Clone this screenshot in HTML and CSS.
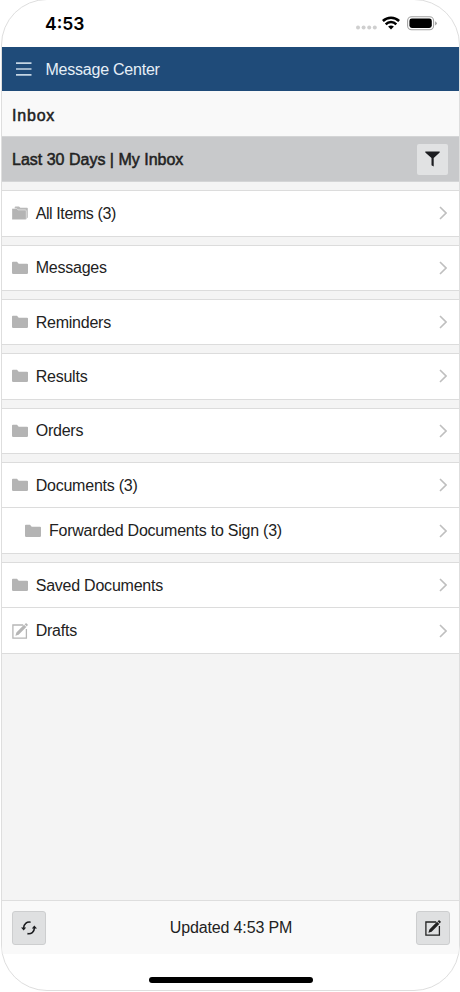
FILE: index.html
```
<!DOCTYPE html>
<html lang="en">
<head>
<meta charset="utf-8">
<title>Message Center</title>
<link rel="stylesheet" href="styles.css">
</head>
<body>
<svg class="defs" width="0" height="0" aria-hidden="true">
  <symbol id="folder" viewBox="0 0 16 13"><path d="M0 1.2Q0 .3 .9 .3H5L6.7 2.2H15Q16 2.2 16 3.1V11.6Q16 12.4 15.1 12.4H.9Q0 12.4 0 11.6Z" fill="#b4b4b4"/></symbol>
  <symbol id="folders" viewBox="0 0 16 14"><path d="M2.7 2.8V1.3Q2.7.4 3.6.4H7L8.4 1.7H15Q15.8 1.7 15.8 2.5V11.5L14.3 13" fill="#b9b9b9"/><path d="M-.2 3.3Q-.2 2.4.8 2.4H4.6L6 3.9H13.2Q14.3 3.9 14.3 4.9V12.8Q14.3 13.7 13.3 13.7H.8Q-.2 13.7-.2 12.8Z" fill="#b4b4b4" stroke="#f4f4f4" stroke-width=".6"/></symbol>
  <symbol id="chevron" viewBox="0 0 8 14"><path d="M1 1l6 6-6 6" fill="none" stroke="#bfbfbf" stroke-width="1.6"/></symbol>
  <symbol id="compose" viewBox="0 0 16 16"><path d="M11.2 2H.9V15.2H14.4V6" fill="none" stroke="currentColor" stroke-width="1.3"/><path d="M3.4 12.7L4.4 9.5 12 1.8 14.3 4.1 6.6 11.7ZM12.6 1.2L13.5.4Q14.1-.1 14.7.5L15.5 1.3Q16 1.9 15.5 2.5L14.8 3.4Z" fill="currentColor"/></symbol>
</svg>
<div class="phone">
  <div class="status">
    <span class="time">4:53</span>
    <div class="signals">
      <svg width="21" height="5" viewBox="0 0 21 5" class="dots"><g fill="#cfcfcf"><circle cx="2" cy="2.5" r="2"/><circle cx="7.6" cy="2.5" r="2"/><circle cx="13.2" cy="2.5" r="2"/><circle cx="18.8" cy="2.5" r="2"/></g></svg>
      <svg width="18" height="14" viewBox="0 0 18 14" class="wifi"><g fill="none" stroke="#000" stroke-width="2.5"><path d="M.9 5A11.6 11.6 0 0 1 17.1 5"/><path d="M3.7 8.3A7.5 7.5 0 0 1 14.3 8.3"/></g><path d="M9 13.4L6.1 10.6Q9 8.4 11.9 10.6Z"/></svg>
      <svg width="30" height="15" viewBox="0 0 30 15" class="battery"><rect x=".6" y=".8" width="26" height="13" rx="4" fill="none" stroke="#a3a3a3" stroke-width="1.1"/><rect x="2.4" y="2.6" width="22.4" height="9.4" rx="2.4"/><path d="M28.2 5.2Q29.7 6 29.7 7.3T28.2 9.4Z" fill="#999"/></svg>
    </div>
  </div>
  <header class="bar">
    <svg width="16" height="14" viewBox="0 0 16 14"><path d="M0 1.2H15.5M0 7H15.5M0 12.8H15.5" stroke="#c4d5e3" stroke-width="1.7"/></svg>
    <span>Message Center</span>
  </header>
  <h1 class="title">Inbox</h1>
  <div class="filter">
    <span class="range">Last 30 Days | My Inbox</span>
    <span class="filter-btn"><svg width="15" height="16" viewBox="0 0 15 16"><path d="M.3.4H14.7V1.6L8.7 6.9V15.5L6.5 14.3V6.9L.3 1.6Z" fill="#1c1d20"/></svg></span>
  </div>
  <main class="list">
    <section class="group"><div class="row"><svg class="ico"><use href="#folders"/></svg><span class="all">All Items (3)</span><svg class="chev"><use href="#chevron"/></svg></div></section>
    <section class="group"><div class="row"><svg class="ico"><use href="#folder"/></svg><span>Messages</span><svg class="chev"><use href="#chevron"/></svg></div></section>
    <section class="group"><div class="row"><svg class="ico"><use href="#folder"/></svg><span>Reminders</span><svg class="chev"><use href="#chevron"/></svg></div></section>
    <section class="group"><div class="row"><svg class="ico"><use href="#folder"/></svg><span>Results</span><svg class="chev"><use href="#chevron"/></svg></div></section>
    <section class="group"><div class="row"><svg class="ico"><use href="#folder"/></svg><span>Orders</span><svg class="chev"><use href="#chevron"/></svg></div></section>
    <section class="group">
      <div class="row"><svg class="ico"><use href="#folder"/></svg><span>Documents (3)</span><svg class="chev"><use href="#chevron"/></svg></div>
      <div class="row sub"><svg class="ico"><use href="#folder"/></svg><span>Forwarded Documents to Sign (3)</span><svg class="chev"><use href="#chevron"/></svg></div>
    </section>
    <section class="group">
      <div class="row"><svg class="ico"><use href="#folder"/></svg><span>Saved Documents</span><svg class="chev"><use href="#chevron"/></svg></div>
      <div class="row"><svg class="ico draft"><use href="#compose"/></svg><span>Drafts</span><svg class="chev"><use href="#chevron"/></svg></div>
    </section>
  </main>
  <footer class="footer">
    <span class="btn"><svg width="16" height="14" viewBox="0 0 16 14"><g fill="none" stroke="#1c1d20" stroke-width="1.6"><path d="M9.6 1.2C5.8.5 2.7 3 2.6 7"/><path d="M6.4 12.6C10.2 13.4 13.3 10.9 13.4 7"/></g><path d="M0 6.5H5.2L2.7 9.4ZM16 7.4H10.8L13.3 4.5Z" fill="#1c1d20"/></svg></span>
    <span class="updated">Updated 4:53 PM</span>
    <span class="btn"><svg width="16" height="16"><use href="#compose"/></svg></span>
  </footer>
  <div class="home"><span></span></div>
</div>
</body>
</html>
```
FILE: styles.css
```
* { box-sizing: border-box; }
body { margin: 0; background: #fff; color: #222; font: 16px/20px "Liberation Sans", Arial, sans-serif; letter-spacing: -.23px; overflow: hidden; }
svg { display: block; flex: none; }
.defs { position: absolute; }
.phone { width: 459px; height: 992px; margin-left: 1px; border: 1px solid #dedede; border-radius: 46px; overflow: hidden; display: flex; flex-direction: column; margin-top: -1px; }
.status { height: 47px; flex: none; display: flex; justify-content: space-between; padding: 0 22px 0 43px; }
.time { font: 600 17.5px/22px Inter, sans-serif; letter-spacing: 0; color: #000; padding-top: 13px; }
.signals { display: flex; padding-top: 16px; }
.dots { margin: 9px 5px 0 0; }
.wifi { margin-right: 7px; }
.bar { height: 44px; flex: none; display: flex; align-items: center; gap: 14px; padding-left: 13.5px; background: #1f4b79; color: #e6eff7; }
.bar span { padding-top: 2px; }
.title { height: 45px; flex: none; margin: 0; padding: 4px 0 0 10px; line-height: 41px; font-size: 16px; font-weight: 400; letter-spacing: .8px; -webkit-text-stroke: .5px #222; background: #f9f9f9; }
.filter { height: 46px; flex: none; display: flex; align-items: center; justify-content: space-between; padding: 0 11px 0 10px; background: #c8c9cb; border-top: 1px solid #d4d5d6; border-bottom: 1px solid #d4d5d6; }
.range { -webkit-text-stroke: .5px #222; letter-spacing: 0; padding-top: 2px; }
.filter-btn { width: 31px; height: 31px; display: flex; align-items: center; justify-content: center; background: #e1e2e3; border-radius: 2px; }
.list { flex: 1; background: #f4f4f4; padding-top: 8.3px; }
.group { border-top: 1px solid #dcdcdc; border-bottom: 1px solid #dcdcdc; background: #fff; margin-bottom: 8px; }
.row { height: 44.33px; display: flex; align-items: center; padding: 0 12px 0 10px; }
.row + .row { border-top: 1px solid #dcdcdc; height: 45.8px; }
.row span { flex: 1; padding: 1px 0 0 7.7px; }
.row .all { letter-spacing: -.4px; }
.row.sub { padding-left: 23.3px; }
.ico { width: 16px; height: 14px; }
.ico.draft { height: 16px; color: #b6b6b6; }
.chev { width: 8px; height: 14px; }
.footer { height: 54px; flex: none; display: flex; align-items: center; justify-content: space-between; padding: 0 9px 0 10px; background: #f9f9f9; border-top: 1px solid #dedede; }
.updated { padding-top: 1px; letter-spacing: -.15px; }
.btn { width: 34px; height: 34px; display: flex; align-items: center; justify-content: center; background: #dfe0e1; border: 1px solid #cdcecf; border-radius: 3px; }
.home { height: 36px; flex: none; display: flex; justify-content: center; padding-top: 23px; }
.home span { width: 164px; height: 6px; border-radius: 3px; background: #000; }
```
